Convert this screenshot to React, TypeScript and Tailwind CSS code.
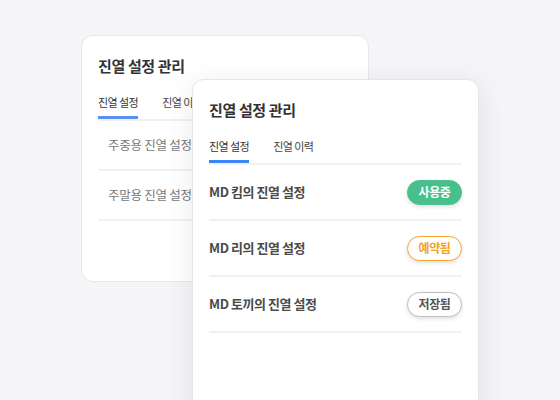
import React from "react";

const font = { fontFamily: '"Noto Sans CJK KR", "Noto Sans", sans-serif' };

function Tabs({ underline }: { underline: string }) {
  return (
    <div className="flex gap-6 border-b-2 border-[#f1f1f3]">
      <div className="flex flex-col">
        <span className="text-[11px] leading-4 tracking-[-0.05em] text-[#333]">진열 설정</span>
        <div className={`mt-[6px] h-[3px] ${underline}`} />
      </div>
      <span className="text-[11px] leading-4 tracking-[-0.05em] text-[#444]">진열 이력</span>
    </div>
  );
}

const rows = [
  { name: "MD 킴의 진열 설정", badge: "사용중", cls: "bg-[#48bf8c] text-white border-[#48bf8c]" },
  { name: "MD 리의 진열 설정", badge: "예약됨", cls: "bg-white text-[#f5a21e] border-[#f7a52a]" },
  { name: "MD 토끼의 진열 설정", badge: "저장됨", cls: "bg-white text-[#555] border-[#bdbdbd]" },
];

export default function App() {
  return (
    <div className="relative h-[400px] w-[560px] overflow-hidden bg-[#f5f5f7]" style={font}>
      <div className="pl-[81px] pt-[35px]">
        <div className="h-[247px] w-[288px] rounded-[12px] border border-[#e8e8ea] bg-white px-4 pt-[20px]">
          <h2 className="text-[15px] font-bold leading-5 tracking-[-0.025em] text-[#333]">진열 설정 관리</h2>
          <div className="mt-[18px]">
            <Tabs underline="bg-[#5b8ff0]" />
          </div>
          {["주중용 진열 설정", "주말용 진열 설정"].map((t) => (
            <div key={t} className="flex h-[50px] items-center border-b-2 border-[#f1f1f3] pl-[10px]">
              <span className="text-[12.5px] tracking-[-0.02em] text-[#777]">{t}</span>
            </div>
          ))}
        </div>
      </div>

      <div className="absolute left-[192px] top-[79px] h-[340px] w-[287px] rounded-[12px] border border-[#e6e6e8] bg-white px-4 pt-[20px] shadow-[0_6px_28px_rgba(0,0,0,0.09)]">
        <h2 className="text-[15px] font-bold leading-5 tracking-[-0.025em] text-[#333]">진열 설정 관리</h2>
        <div className="mt-[18px]">
          <Tabs underline="bg-[#3d83f5]" />
        </div>
        {rows.map((r) => (
          <div key={r.name} className="flex h-[56px] items-center justify-between border-b-2 border-[#f1f1f3]">
            <span className="text-[13px] font-semibold tracking-[-0.035em] text-[#4a4a4a]">{r.name}</span>
            <span
              className={`flex h-[25px] w-[55px] items-center justify-center rounded-full border text-[12px] font-bold tracking-[-0.03em] shadow-[0_2px_4px_rgba(0,0,0,0.12)] ${r.cls}`}
            >
              {r.badge}
            </span>
          </div>
        ))}
      </div>
    </div>
  );
}
